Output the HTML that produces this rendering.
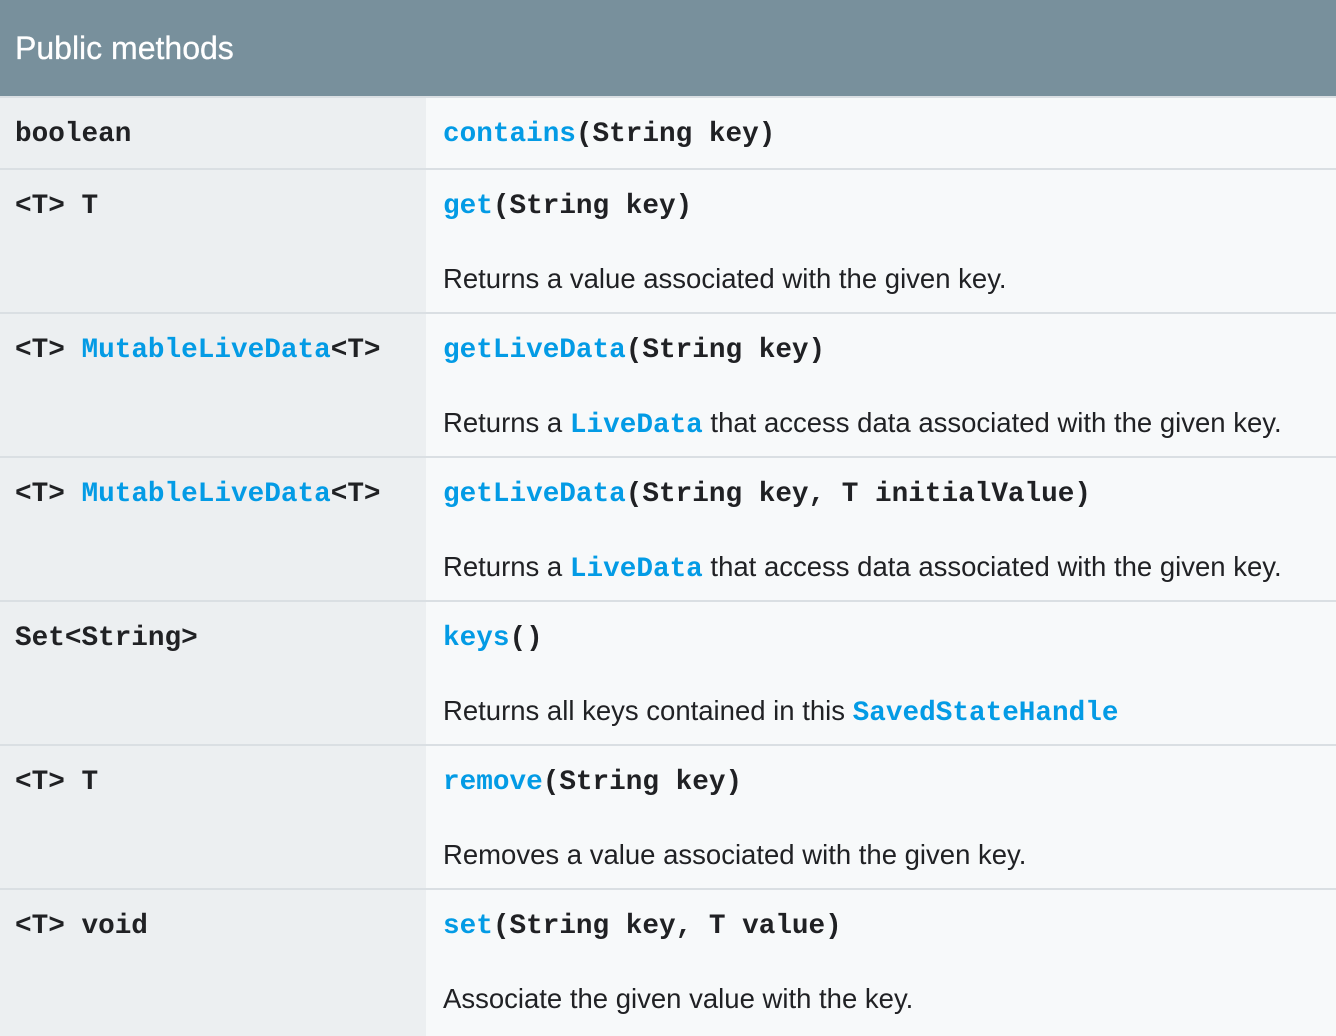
<!DOCTYPE html>
<html><head><meta charset="utf-8"><style>
html,body{margin:0;padding:0;width:1336px;height:1036px;overflow:hidden;background:#f7f9fa}
.h{height:96px;background:#78909c;color:#fff;font:32px/96px "Liberation Sans",sans-serif;padding-left:15px;border-bottom:2px solid #dadfe3;-webkit-text-stroke:0.3px #fff}
.r{display:flex;border-bottom:2px solid #dadfe3}
.l{width:411px;padding-left:15px;background:#eceff1}
.rt{flex:1;padding-left:17px;background:#f7f9fa}
.c{font:bold 27.7px/74px "Liberation Mono",monospace;color:#202124;white-space:pre}
.d{font:27.5px/70px "Liberation Sans",sans-serif;color:#202124;white-space:pre}
.b{color:#039be5}
.d .b{font:bold 27.7px "Liberation Mono",monospace}
</style></head><body>
<div class="h">Public methods</div>
<div class="r" style="height:70px"><div class="l c">boolean</div><div class="rt"><div class="c"><span class="b">contains</span>(String key)</div></div></div>
<div class="r" style="height:142px"><div class="l c">&lt;T&gt; T</div><div class="rt"><div class="c"><span class="b">get</span>(String key)</div><div class="d">Returns a value associated with the given key.</div></div></div>
<div class="r" style="height:142px"><div class="l c">&lt;T&gt; <span class="b">MutableLiveData</span>&lt;T&gt;</div><div class="rt"><div class="c"><span class="b">getLiveData</span>(String key)</div><div class="d">Returns a <span class="b">LiveData</span> that access data associated with the given key.</div></div></div>
<div class="r" style="height:142px"><div class="l c">&lt;T&gt; <span class="b">MutableLiveData</span>&lt;T&gt;</div><div class="rt"><div class="c"><span class="b">getLiveData</span>(String key, T initialValue)</div><div class="d">Returns a <span class="b">LiveData</span> that access data associated with the given key.</div></div></div>
<div class="r" style="height:142px"><div class="l c">Set&lt;String&gt;</div><div class="rt"><div class="c"><span class="b">keys</span>()</div><div class="d">Returns all keys contained in this <span class="b">SavedStateHandle</span></div></div></div>
<div class="r" style="height:142px"><div class="l c">&lt;T&gt; T</div><div class="rt"><div class="c"><span class="b">remove</span>(String key)</div><div class="d">Removes a value associated with the given key.</div></div></div>
<div class="r" style="height:146px;border:0"><div class="l c">&lt;T&gt; void</div><div class="rt"><div class="c"><span class="b">set</span>(String key, T value)</div><div class="d">Associate the given value with the key.</div></div></div>
</body></html>
